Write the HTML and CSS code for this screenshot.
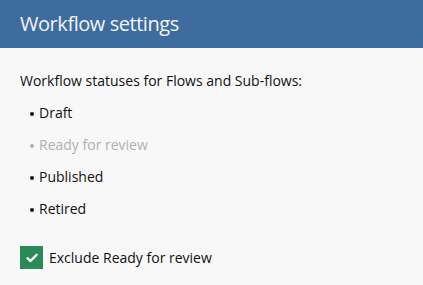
FILE: index.html
```html
<!DOCTYPE html>
<html>
<head>
<meta charset="utf-8">
<link rel="stylesheet" href="styles.css">
</head>
<body>
<div class="header"><h1 class="title">Workflow settings</h1></div>
<div class="content">
  <p class="intro">Workflow statuses for Flows and Sub-flows:</p>
  <ul class="statuses">
    <li>Draft</li>
    <li class="muted">Ready for review</li>
    <li>Published</li>
    <li>Retired</li>
  </ul>
  <label class="check">
    <span class="box"><svg width="12" height="10" viewBox="0 0 12 10"><path d="M1.5 5.2 L4.5 8 L10.5 1.8" fill="none" stroke="#fff" stroke-width="2.4" stroke-linecap="round" stroke-linejoin="round"/></svg></span>
    <span class="check-label">Exclude Ready for review</span>
  </label>
</div>
</body>
</html>
```

FILE: styles.css
```css
html, body {
  margin: 0;
  padding: 0;
  background: #f8f8f8;
  font-family: "Segoe UI", "Open Sans", "Noto Sans", sans-serif;
  color: #111;
}
.header {
  background: #3f6c9f;
  height: 48px;
  display: flex;
  align-items: center;
  padding-left: 20px;
}
.title {
  margin: 0;
  font-weight: 400;
  font-size: 20px;
  letter-spacing: -0.45px;
  color: #f2f4f7;
  line-height: 1;
}
.content {
  padding: 23px 20px 0 20px;
}
.intro {
  margin: 0;
  font-size: 14px;
  line-height: 20px;
}
.statuses {
  list-style: none;
  margin: 12px 0 0 0;
  padding: 0 0 0 10px;
  font-size: 14px;
}
.statuses li {
  line-height: 20px;
  height: 32px;
  display: flex;
  align-items: flex-start;
}
.statuses li::before {
  content: "";
  width: 4px;
  height: 4px;
  border-radius: 50%;
  background: currentColor;
  margin: 9px 5px 0 0;
}
.statuses .muted {
  color: #b0b0b0;
}
.check {
  display: flex;
  align-items: center;
  margin-top: 15px;
  gap: 6px;
  font-size: 14px;
}
.box {
  width: 23px;
  height: 23px;
  background: #2a8a56;
  display: flex;
  align-items: center;
  justify-content: center;
}
```
